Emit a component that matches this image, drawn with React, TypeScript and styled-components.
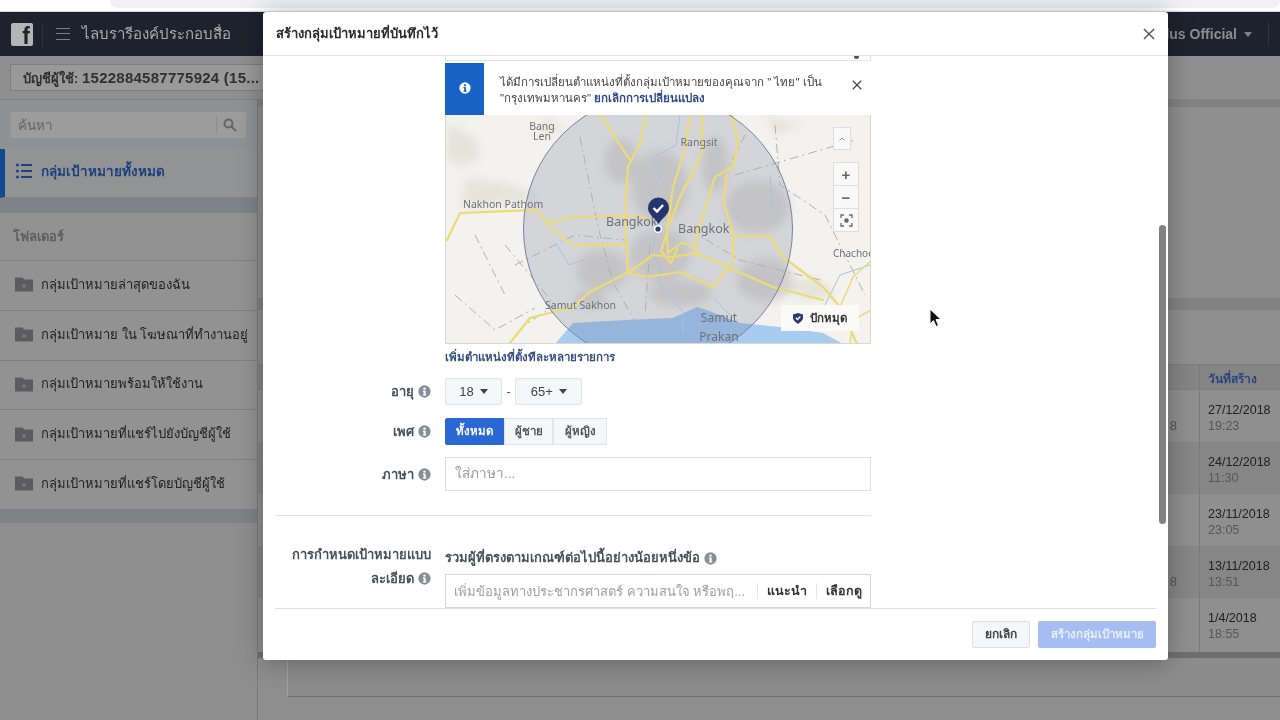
import React from "react";
import styled, { createGlobalStyle } from "styled-components";

const Global = createGlobalStyle`
  html, body { margin: 0; padding: 0; background: #8e8e8e; overflow: hidden; }
  * { box-sizing: border-box; }
  body { font-family: "Liberation Sans", "Noto Sans", "DejaVu Sans", sans-serif; }
`;

const Page = styled.div`
  position: relative; width: 1280px; height: 720px; overflow: hidden;
  display: flex; flex-direction: column; background: #8e8e8e; filter: blur(0.35px);
`;
const BrowserStrip = styled.div`
  height: 12px; flex: none; background: #fff; padding-left: 110px; border-bottom: 1px solid #d8d8d8;
`;
const UrlBar = styled.div`
  height: 8px; background: #eff1f5; border-radius: 0 0 8px 8px;
`;
const TopBar = styled.header`
  height: 44px; flex: none; background: #1e222e; display: flex; align-items: center; padding: 0 11px 0 11px;
`;
const Logo = styled.div`
  width: 22px; height: 23px; flex: none; background: #b5b5b5; border-radius: 2px; position: relative; overflow: hidden;
  color: #1e222e; font: bold 23px/27px "Liberation Sans", sans-serif; text-align: right; padding-right: 3px;
`;
const BarDivider = styled.div<{ $m: string }>`
  width: 1px; height: 24px; background: #2e3340; margin: ${(p) => p.$m}; flex: none;
`;
const Burger = styled.div`
  width: 14px; height: 12px; flex: none; margin-right: 12px;
  border-top: 1.5px solid #7d7f85; border-bottom: 1.5px solid #7d7f85; position: relative;
  &::after { content: ""; position: absolute; left: 0; right: 0; top: 3.5px; height: 1.5px; background: #7d7f85; }
`;
const BarTitle = styled.div`
  font-size: 15px; color: #a9abb0; white-space: nowrap;
`;
const BarSpacer = styled.div`flex: 1;`;
const BarAccount = styled.div`
  font-size: 14px; font-weight: bold; color: #8b8e96; white-space: nowrap; display: flex; align-items: center; gap: 7px;
`;
const Caret = styled.span<{ $c: string }>`
  width: 0; height: 0; display: inline-block;
  border-left: 4.5px solid transparent; border-right: 4.5px solid transparent;
  border-top: 5px solid ${(p) => p.$c};
`;
const SubBar = styled.div`
  height: 43px; flex: none; background: #8f8f8f; padding: 8px 0 0 10px;
`;
const AccountButton = styled.div`
  width: 253px; height: 27px; background: #999; border: 1px solid #7e7e7e; border-right: none;
  font-size: 13px; font-weight: bold; color: #303030; line-height: 25px; padding-left: 12px; white-space: nowrap; overflow: hidden;
`;
const AccountNumber = styled.span`font-size: 15px; letter-spacing: 0.25px;`;
const Content = styled.div`flex: 1; display: flex; min-height: 0;`;
const Sidebar = styled.aside`
  width: 258px; flex: none; background: #7f8287; display: flex; flex-direction: column;
  padding-top: 1px; border-right: 1px solid #7a7a7a;
`;
const SearchPanel = styled.div`
  height: 49px; background: #8f9194; padding: 12px 11px 0; flex: none;
`;
const SearchBox = styled.div`
  height: 26px; background: #9c9c9c; border-radius: 2px; display: flex; align-items: center; justify-content: space-between;
  padding: 0 9px 0 7px; font-size: 13.5px; color: #666;
`;
const SearchIcon = styled.div`
  border-left: 1px solid #8d8d8d; height: 18px; padding-left: 6px; display: flex; align-items: center; color: #666;
`;
const ActiveItem = styled.div`
  height: 49px; flex: none; background: #929395; border-left: 5px solid #12498f; display: flex; align-items: center;
  padding: 0 0 4px 11px; gap: 9px; font-size: 13.5px; font-weight: bold; color: #1d3f7e; border-bottom: 1px solid #858585;
`;
const FolderPanel = styled.div`
  margin-top: 15px; flex: none; background: #929292;
`;
const FolderHead = styled.div`
  height: 48px; padding: 0 0 0 13px; display: flex; align-items: center; font-size: 13px; font-weight: bold; color: #5e5e5e;
  border-bottom: 1px solid #7f7f7f;
`;
const FolderRow = styled.div`
  height: 49.75px; display: flex; align-items: center; padding: 0 0 2px 15px; gap: 8px; font-size: 13px; color: #222;
  border-bottom: 1px solid #7f7f7f; white-space: nowrap;
`;
const FillPanel = styled.div`
  margin-top: 13px; flex: 1; background: #8e8e8e;
`;
const Main = styled.main`flex: 1; display: flex; flex-direction: column; min-width: 0;`;
const Band = styled.div<{ $h: number }>`
  height: ${(p) => p.$h}px; flex: none; background: #828282;
`;
const MainPanel = styled.div<{ $h: number }>`
  height: ${(p) => p.$h}px; flex: none; background: #8f8f8f;
`;
const TableHead = styled.div`
  height: 26px; flex: none; display: flex; background: #858585; border-top: 1px solid #7d7d7d; border-bottom: 1px solid #7d7d7d;
`;
const Row = styled.div<{ $alt?: boolean; $h?: number }>`
  height: ${(p) => p.$h ?? 52}px; flex: none; display: flex; background: ${(p) => (p.$alt ? "#868686" : "#8f8f8f")};
`;
const PrevCell = styled.div`
  flex: 1; text-align: right; padding: 28px 22px 0 0; font-size: 13px; color: #555;
`;
const DateCell = styled.div`
  width: 81px; flex: none; border-left: 1px solid #7a7a7a; padding: 12px 0 0 8px; font-size: 12.5px; line-height: 16px; color: #202020;
`;
const HeadCell = styled(DateCell)`
  padding-top: 6px; font-size: 12px; font-weight: bold; color: #2b4480;
`;
const Time = styled.div`color: #575757;`;
const TableEnd = styled.div`height: 6px; flex: none; background: #6f6f6f;`;
const BottomCard = styled.div`
  margin-left: 29px; height: 39px; flex: none; background: #8c8c8c; border-left: 1px solid #a0a0a0; border-bottom: 1px solid #6e6e6e;
`;

const Modal = styled.div`
  position: absolute; left: 263px; top: 12px; width: 905px; height: 648px; background: #fff; border-radius: 3px;
  display: flex; flex-direction: column; box-shadow: 0 2px 26px rgba(0,0,0,.3); overflow: hidden;
`;
const ModalHead = styled.div`
  height: 44px; flex: none; border-bottom: 1px solid #e4e4e4; display: flex; align-items: center; justify-content: space-between;
  padding: 0 13px 0 13px; font-size: 13px; font-weight: bold; color: #2a2a2a;
`;
const ModalBody = styled.div`
  flex: 1; min-height: 0; overflow: hidden; padding: 0 12px 0 13px;
`;
const Scroll = styled.div`
  position: absolute; left: 896px; top: 213px; width: 7px; height: 299px; background: #818181; border-radius: 4px;
`;
const ModalFoot = styled.div`
  height: 52px; flex: none; margin: 0 12px; border-top: 1px solid #dedede; display: flex; justify-content: flex-end; align-items: flex-start;
  padding-top: 12px; gap: 8px;
`;
const CancelBtn = styled.div`
  width: 58px; height: 27px; background: #f5f6f7; border: 1px solid #dfe0e4; border-radius: 2px;
  font-size: 12px; font-weight: bold; color: #444; text-align: center; line-height: 25px;
`;
const CreateBtn = styled.div`
  width: 118px; height: 27px; background: #a5bdf0; border-radius: 2px;
  font-size: 11.5px; font-weight: bold; color: #e7eefc; text-align: center; line-height: 27px;
`;
const FormRow = styled.div<{ $mt: number }>`
  display: grid; grid-template-columns: 169px 426px; margin-top: ${(p) => p.$mt}px;
`;
const FormLabel = styled.div`
  padding-right: 14px; display: flex; align-items: center; justify-content: flex-end; gap: 4px;
  font-size: 13px; font-weight: bold; color: #4b4f56;
`;
const DetailLabel = styled.div`
  padding-right: 14px; text-align: right; font-size: 13px; font-weight: bold; color: #4b4f56; line-height: 24px;
`;
const Fragment = styled.div`
  height: 5px; margin-bottom: 2px; border: 1px solid #e5e5e5; border-top: none; position: relative;
  &::after { content: ""; position: absolute; right: 11px; top: 0; width: 5px; height: 3px; background: #555; border-radius: 0 0 3px 3px; }
`;
const Notice = styled.div`
  height: 52px; display: flex; background: #fff; align-items: stretch;
`;
const NoticeIcon = styled.div`
  width: 39px; flex: none; background: #1863c6; display: flex; align-items: center; justify-content: center; padding-bottom: 3px;
`;
const NoticeText = styled.div`
  flex: 1; padding: 11px 0 0 16px; font-size: 11.5px; line-height: 16px; color: #444;
`;
const NoticeLink = styled.span`color: #2d4a8a; font-weight: bold;`;
const NoticeClose = styled.div`
  width: 29px; flex: none; display: flex; align-items: center; justify-content: center; color: #444; padding-bottom: 8px;
`;
const MapFrame = styled.div`
  position: relative; height: 229px; border: 1px solid #d8d8d8; border-top: none; overflow: hidden; background: #f1f0ec;
`;
const MapDrawing = styled.svg`display: block; position: absolute; left: -1px; top: 0;`;
const MapBtn = styled.div<{ $top: number; $h: number; $w: number }>`
  position: absolute; left: 387px; top: ${(p) => p.$top}px; width: ${(p) => p.$w}px; height: ${(p) => p.$h}px;
  background: #f8f8f8; border: 1px solid #dedede; display: flex; align-items: center; justify-content: center; color: #666;
  font-weight: bold; font-size: 15px; line-height: 1;
`;
const PinChip = styled.div`
  position: absolute; left: 335px; top: 190px; width: 78px; height: 26px; background: rgba(250,250,250,.94);
  display: flex; align-items: center; justify-content: center; gap: 7px; font-size: 11.5px; font-weight: bold; color: #333;
`;
const MapLink = styled.div`
  font-size: 11.5px; font-weight: bold; color: #33507f; margin-top: 5px; line-height: 16px;
`;
const AgeRow = styled.div`display: flex; align-items: center; gap: 4.5px; color: #555; font-size: 13px;`;
const Select = styled.div<{ $w: number }>`
  width: ${(p) => p.$w}px; height: 27px; background: #f5f6f7; border: 1px solid #e3e4e7; border-radius: 2px;
  display: flex; align-items: center; justify-content: center; gap: 6px; font-size: 13px; color: #444;
`;
const Segs = styled.div`display: flex;`;
const Seg = styled.div<{ $on?: boolean; $w: number }>`
  width: ${(p) => p.$w}px; height: 27px; font-size: 11.5px; font-weight: bold; text-align: center; line-height: 25px;
  background: ${(p) => (p.$on ? "#2a66d4" : "#f5f6f7")}; color: ${(p) => (p.$on ? "#fff" : "#555")};
  border: 1px solid ${(p) => (p.$on ? "#2a66d4" : "#e3e4e7")}; border-radius: ${(p) => (p.$on ? "2px 0 0 2px" : "0")};
`;
const TextInput = styled.div`
  height: 34px; border: 1px solid #dfdfdf; padding-left: 9px; font-size: 13.5px; color: #9a9a9a; line-height: 32px;
`;
const Rule = styled.div`
  width: 595px; height: 1px; background: #e5e5e5; margin-top: 24px;
`;
const DetailHead = styled.div`
  font-size: 13px; font-weight: bold; color: #4b4f56; line-height: 20px; display: flex; align-items: center; gap: 4px; margin-top: 5px;
`;
const Detail = styled.div`
  height: 34px; margin-top: 6px; border: 1px solid #d8d8d8; display: flex; align-items: center; padding-left: 8px; font-size: 13px;
`;
const DetailPlaceholder = styled.div`flex: 1; color: #a0a0a0; white-space: nowrap; overflow: hidden;`;
const DetailAction = styled.div`
  flex: none; padding: 0 9px; border-left: 1px solid #e5e5e5; font-size: 12.5px; font-weight: bold; color: #333; line-height: 16px;
  &:last-child { padding-right: 8px; }
`;
const Cursor = styled.svg`position: absolute; left: 928px; top: 307px;`;

const Info = ({ c = "#8a8d92", s = 13, ic = "#fff" }: { c?: string; s?: number; ic?: string }) => (
  <svg width={s} height={s} viewBox="0 0 14 14" style={{ flex: "none", verticalAlign: "-2px" }}>
    <circle cx="7" cy="7" r="6.6" fill={c} />
    <rect x="6" y="6" width="2.2" height="5" fill={ic} />
    <rect x="5.2" y="6" width="1.4" height="1" fill={ic} />
    <rect x="5.2" y="10.3" width="3.8" height="1" fill={ic} />
    <circle cx="7" cy="3.9" r="1.3" fill={ic} />
  </svg>
);
const Close = ({ s = 13, c = "#555" }: { s?: number; c?: string }) => (
  <svg width={s} height={s} viewBox="0 0 13 13"><path d="M1 1l11 11M12 1L1 12" stroke={c} strokeWidth="1.5" fill="none" /></svg>
);
const FolderIcon = () => (
  <svg width="18" height="16" viewBox="0 0 18 16" style={{ flex: "none" }}>
    <path d="M0 1.5h7.5l1.8 2H18V15.5H0z" fill="#5c5c5e" />
    <circle cx="9" cy="10" r="1.8" fill="#7a7a7a" />
  </svg>
);
const ListIcon = () => (
  <svg width="16" height="16" viewBox="0 0 16 16" fill="#23407a" style={{ flex: "none" }}>
    <rect x="0" y="0.5" width="3" height="3" rx="1.5" /><rect x="5" y="1" width="11" height="2" />
    <rect x="0" y="6.5" width="3" height="3" rx="1.5" /><rect x="5" y="7" width="11" height="2" />
    <rect x="0" y="12.5" width="3" height="3" rx="1.5" /><rect x="5" y="13" width="11" height="2" />
  </svg>
);

const Road = ({ d, w = 2.2 }: { d: string; w?: number }) => (
  <path d={d} fill="none" stroke="#ecdb74" strokeWidth={w} strokeLinejoin="round" strokeLinecap="round" />
);
const MapText = styled.text<{ $s?: number }>`
  font-family: "Noto Sans", "Open Sans", sans-serif; font-size: ${(p) => p.$s ?? 10.5}px; fill: #6f7278;
`;

const MapArt = () => (
  <MapDrawing width="426" height="229" viewBox="0 0 426 229">
    <defs>
      <filter id="soft" x="-20%" y="-20%" width="140%" height="140%"><feGaussianBlur stdDeviation="5" /></filter>
    </defs>
    <rect width="426" height="229" fill="#f3f2ee" />
    <g fill="#e5e4da" filter="url(#soft)">
      <path d="M2 8l28 14 6 22-22 8-14-8zM22 62l48 8 25 14-30 5-50 4zM320 0l40 10-30 10zM335 168l38-6 18 18-30 6zM100 2l22 12-30 6z" />
    </g>
    <path d="M110 229l18-21 54-3 46-2 24-11 10 3 33 13 40 4 43 6 20 11z" fill="#a8ccf0" />
    <circle cx="213" cy="114" r="134.500" fill="rgba(50,60,110,.16)" />
    <g fill="#b3b2b2" opacity=".5" filter="url(#soft)">
      <ellipse cx="176" cy="46" rx="16" ry="22" />
      <ellipse cx="312" cy="92" rx="32" ry="26" />
      <ellipse cx="157" cy="155" rx="26" ry="20" />
      <ellipse cx="320" cy="165" rx="28" ry="22" />
      <ellipse cx="215" cy="72" rx="28" ry="36" />
      <ellipse cx="270" cy="50" rx="13" ry="28" />
      <ellipse cx="145" cy="184" rx="16" ry="9" />
      <ellipse cx="235" cy="178" rx="32" ry="13" />
      <ellipse cx="215" cy="140" rx="30" ry="26" />
    </g>
    <g fill="none" stroke="#b0b0b0" strokeWidth="1" strokeDasharray="9 4 2 4">
      <path d="M135 22l18 90 15 55 25 45M60 130l50 60-30 20M30 120l30 60M330 10l5 60 45 30 40 80M245 115l50 30 80 20M290 60l120-35M70 150l60-30 50 5M205 130l-5 70M10 180l40 35 40-22M300 20l-15 30" />
    </g>
    <g fill="none" stroke="#a6c3e2" strokeWidth="1">
      <path d="M235 0l-4 30-22 12 6 20-10 15 8 30-6 30 10 20-4 10 25 30 0 20M112 130l12 20 15-5M375 200l20-40 30-10M270 185l15 15M325 60l3 35" />
    </g>
    <g>
      <Road d="M202 0l-7 28-12 24-3 43 3 63" />
      <Road d="M155 0l30 45" />
      <Road d="M245 0l-5 35-12 37-6 46 1 20" />
      <Road d="M257 0v38l-22 44-10 26" />
      <Road d="M287 0l6 28-5 24-18 10-18 56-2 17" />
      <Road d="M282 60l-4 25 10 33v27l-6 10" />
      <Road d="M2 125l13-27 77-3 13 17 23 18h54" />
      <Road d="M102 108l26-6 54-1 20 2" />
      <Road d="M288 121h37l13 21 40 30 17 20 17 37" />
      <Road d="M183 158l25-18 20 2 24-4 30 14 46 20 50 13" />
      <Road d="M183 158l19 4 33-5 33 15 14-17" />
      <Road d="M182 158l-37 19-17 15-43 11-20 25" />
      <Road d="M223 138l13-10 14 3 3 10M222 118l-6 18 10 12 6-14" />
      <Road d="M395 192l13-30 19-17" w={1.5} />
      <Road d="M405 229l3-24 18-10" w={1.5} />
    </g>
    <circle cx="213" cy="114" r="134.500" fill="none" stroke="#7a80a0" strokeWidth="1" />
    <MapText x="97" y="15" textAnchor="middle">Bang</MapText>
    <MapText x="97" y="25" textAnchor="middle">Len</MapText>
    <MapText x="254" y="31" textAnchor="middle">Rangsit</MapText>
    <MapText x="18" y="93">Nakhon Pathom</MapText>
    <MapText x="161" y="111" $s={12.5}>Bangkok</MapText>
    <MapText x="233" y="118" $s={12.5}>Bangkok</MapText>
    <MapText x="388" y="142" $s={10}>Chachoer</MapText>
    <MapText x="100" y="194">Samut Sakhon</MapText>
    <MapText x="274" y="207" textAnchor="middle" $s={12}>Samut</MapText>
    <MapText x="274" y="226" textAnchor="middle" $s={12}>Prakan</MapText>
    <circle cx="213" cy="114" r="4" fill="#fff" />
    <circle cx="213" cy="114" r="2.6" fill="#2b3a78" />
    <path d="M213.500 109c-3-6-10.500-9-10.500-16a10.500 10.500 0 0 1 21 0c0 7-7.500 10-10.500 16z" fill="#25336f" />
    <path d="M208.500 93l3.500 3.500 6-6.500" fill="none" stroke="#fff" strokeWidth="2.4" />
  </MapDrawing>
);

const rows = [
  { d: "27/12/2018", t: "19:23", p: "8" },
  { d: "24/12/2018", t: "11:30", p: "", alt: true },
  { d: "23/11/2018", t: "23:05", p: "" },
  { d: "13/11/2018", t: "13:51", p: "8", alt: true },
  { d: "1/4/2018", t: "18:55", p: "", h: 54 },
];
const folders = [
  "กลุ่มเป้าหมายล่าสุดของฉัน",
  "กลุ่มเป้าหมาย ใน โฆษณาที่ทำงานอยู่",
  "กลุ่มเป้าหมายพร้อมให้ใช้งาน",
  "กลุ่มเป้าหมายที่แชร์ไปยังบัญชีผู้ใช้",
  "กลุ่มเป้าหมายที่แชร์โดยบัญชีผู้ใช้",
];

export default function App() {
  return (
    <Page>
      <Global />
      <BrowserStrip><UrlBar /></BrowserStrip>
      <TopBar>
        <Logo>f</Logo>
        <BarDivider $m="0 13px 0 9px" />
        <Burger />
        <BarTitle>ไลบรารีองค์ประกอบสื่อ</BarTitle>
        <BarSpacer />
        <BarAccount>Plus Official <Caret $c="#80838b" /></BarAccount>
        <BarDivider $m="0 0 0 16px" />
      </TopBar>
      <SubBar><AccountButton>บัญชีผู้ใช้: <AccountNumber>1522884587775924 (15...</AccountNumber></AccountButton></SubBar>
      <Content>
        <Sidebar>
          <SearchPanel>
            <SearchBox>ค้นหา
              <SearchIcon>
                <svg width="14" height="14" viewBox="0 0 14 14" fill="none" stroke="#666" strokeWidth="2"><circle cx="5.500" cy="5.500" r="4" /><path d="M8.500 8.500l4.500 4.500" /></svg>
              </SearchIcon>
            </SearchBox>
          </SearchPanel>
          <ActiveItem><ListIcon />กลุ่มเป้าหมายทั้งหมด</ActiveItem>
          <FolderPanel>
            <FolderHead>โฟลเดอร์</FolderHead>
            {folders.map((f) => <FolderRow key={f}><FolderIcon />{f}</FolderRow>)}
          </FolderPanel>
          <FillPanel />
        </Sidebar>
        <Main>
          <Band $h={8} />
          <MainPanel $h={191} />
          <Band $h={12} />
          <MainPanel $h={54} />
          <TableHead><PrevCell /><HeadCell>วันที่สร้าง</HeadCell></TableHead>
          {rows.map((r) => (
            <Row key={r.d} $alt={r.alt} $h={r.h}>
              <PrevCell>{r.p}</PrevCell>
              <DateCell>{r.d}<Time>{r.t}</Time></DateCell>
            </Row>
          ))}
          <TableEnd />
          <BottomCard />
        </Main>
      </Content>

      <Modal>
        <ModalHead>สร้างกลุ่มเป้าหมายที่บันทึกไว้<Close s={12} /></ModalHead>
        <ModalBody>
          <FormRow $mt={0}>
            <div />
            <div>
              <Fragment />
              <Notice>
                <NoticeIcon><Info c="#fff" ic="#1863c6" s={12} /></NoticeIcon>
                <NoticeText>
                  ได้มีการเปลี่ยนตำแหน่งที่ตั้งกลุ่มเป้าหมายของคุณจาก " ไทย" เป็น<br />
                  "กรุงเทพมหานคร" <NoticeLink>ยกเลิกการเปลี่ยนแปลง</NoticeLink>
                </NoticeText>
                <NoticeClose><Close s={10} c="#444" /></NoticeClose>
              </Notice>
              <MapFrame>
                <MapArt />
                <MapBtn $top={12} $h={23} $w={18}>
                  <svg width="6" height="4" viewBox="0 0 6 4"><path d="M.5 3.500L3 1l2.500 2.500" fill="none" stroke="#888" /></svg>
                </MapBtn>
                <MapBtn $top={47} $h={24} $w={26}>+</MapBtn>
                <MapBtn $top={70} $h={24} $w={26}>−</MapBtn>
                <MapBtn $top={93} $h={24} $w={26}>
                  <svg width="13" height="13" viewBox="0 0 13 13" fill="none" stroke="#666" strokeWidth="1.300"><path d="M1 4V1h3M9 1h3v3M12 9v3H9M4 12H1V9" /><circle cx="6.500" cy="6.500" r="2.200" fill="#666" stroke="none" /></svg>
                </MapBtn>
                <PinChip>
                  <svg width="10" height="11" viewBox="0 0 10 11"><path d="M5 11C3 9 0 8 0 4.500V1.500L5 0l5 1.500v3C10 8 7 9 5 11z" fill="#2b3a78" /><path d="M2.800 4.800l1.700 1.700 2.800-3" fill="none" stroke="#fff" strokeWidth="1.300" /></svg>
                  ปักหมุด
                </PinChip>
              </MapFrame>
              <MapLink>เพิ่มตำแหน่งที่ตั้งทีละหลายรายการ</MapLink>
            </div>
          </FormRow>
          <FormRow $mt={13}>
            <FormLabel>อายุ <Info /></FormLabel>
            <AgeRow>
              <Select $w={57}>18 <Caret $c="#444" /></Select>-
              <Select $w={67}>65+ <Caret $c="#444" /></Select>
            </AgeRow>
          </FormRow>
          <FormRow $mt={13}>
            <FormLabel>เพศ <Info /></FormLabel>
            <Segs>
              <Seg $on $w={59}>ทั้งหมด</Seg>
              <Seg $w={49}>ผู้ชาย</Seg>
              <Seg $w={54}>ผู้หญิง</Seg>
            </Segs>
          </FormRow>
          <FormRow $mt={12}>
            <FormLabel>ภาษา <Info /></FormLabel>
            <TextInput>ใส่ภาษา...</TextInput>
          </FormRow>
          <Rule />
          <FormRow $mt={27}>
            <DetailLabel>การกำหนดเป้าหมายแบบ<br />ละเอียด <Info /></DetailLabel>
            <div>
              <DetailHead>รวมผู้ที่ตรงตามเกณฑ์ต่อไปนี้อย่างน้อยหนึ่งข้อ <Info /></DetailHead>
              <Detail>
                <DetailPlaceholder>เพิ่มข้อมูลทางประชากรศาสตร์ ความสนใจ หรือพฤ...</DetailPlaceholder>
                <DetailAction>แนะนำ</DetailAction>
                <DetailAction>เลือกดู</DetailAction>
              </Detail>
            </div>
          </FormRow>
        </ModalBody>
        <ModalFoot>
          <CancelBtn>ยกเลิก</CancelBtn>
          <CreateBtn>สร้างกลุ่มเป้าหมาย</CreateBtn>
        </ModalFoot>
        <Scroll />
      </Modal>
      <Cursor width="14" height="22" viewBox="0 0 14 22">
        <path d="M2 2v15l3.500-3.500 2.500 6 2.500-1-2.500-6h5z" fill="#111" stroke="#fff" strokeWidth="1" />
      </Cursor>
    </Page>
  );
}
